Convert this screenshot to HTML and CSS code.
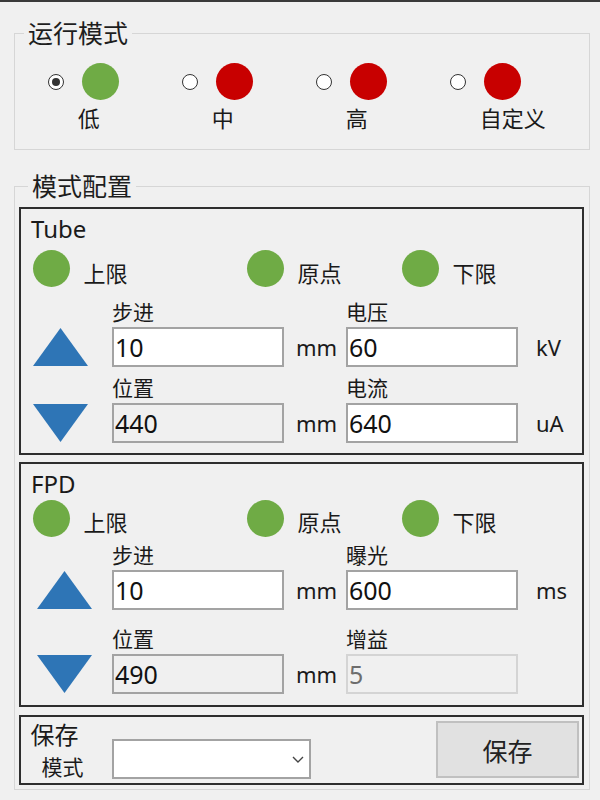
FILE: index.html
```html
<!DOCTYPE html>
<html lang="zh-CN">
<head>
<meta charset="utf-8">
<title>运行模式</title>
<link rel="stylesheet" href="styles.css">
</head>
<body>
<div class="window">
  <fieldset class="group">
    <legend class="group-title">运行模式</legend>
    <div class="modes">
      <div class="opt">
        <span class="radio on"></span>
        <span class="led green"></span>
        <span class="opt-label">低</span>
      </div>
      <div class="opt">
        <span class="radio"></span>
        <span class="led red"></span>
        <span class="opt-label">中</span>
      </div>
      <div class="opt">
        <span class="radio"></span>
        <span class="led red"></span>
        <span class="opt-label">高</span>
      </div>
      <div class="opt">
        <span class="radio"></span>
        <span class="led red"></span>
        <span class="opt-label">自定义</span>
      </div>
    </div>
  </fieldset>

  <fieldset class="group config">
    <legend class="group-title">模式配置</legend>

    <section class="panel tube">
      <div class="panel-title">Tube</div>
      <div class="leds">
        <div class="led-item"><span class="led green"></span><span class="led-text">上限</span></div>
        <div class="led-item"><span class="led green"></span><span class="led-text">原点</span></div>
        <div class="led-item"><span class="led green"></span><span class="led-text">下限</span></div>
      </div>
      <div class="form">
        <span class="lbl lbl-a">步进</span>
        <span class="lbl lbl-b">电压</span>
        <svg class="tri" viewBox="0 0 55 38"><polygon points="27.5,0 55,38 0,38"/></svg>
        <input class="field" value="10">
        <span class="unit">mm</span>
        <input class="field" value="60">
        <span class="unit unit-r">kV</span>
        <span class="lbl lbl-a">位置</span>
        <span class="lbl lbl-b">电流</span>
        <svg class="tri" viewBox="0 0 55 38"><polygon points="0,0 55,0 27.5,38"/></svg>
        <input class="field ro" value="440" readonly>
        <span class="unit">mm</span>
        <input class="field" value="640">
        <span class="unit unit-r">uA</span>
      </div>
    </section>

    <section class="panel fpd">
      <div class="panel-title">FPD</div>
      <div class="leds">
        <div class="led-item"><span class="led green"></span><span class="led-text">上限</span></div>
        <div class="led-item"><span class="led green"></span><span class="led-text">原点</span></div>
        <div class="led-item"><span class="led green"></span><span class="led-text">下限</span></div>
      </div>
      <div class="form">
        <span class="lbl lbl-a">步进</span>
        <span class="lbl lbl-b">曝光</span>
        <svg class="tri" viewBox="0 0 55 38"><polygon points="27.5,0 55,38 0,38"/></svg>
        <input class="field" value="10">
        <span class="unit">mm</span>
        <input class="field" value="600">
        <span class="unit unit-r">ms</span>
        <span class="lbl lbl-a">位置</span>
        <span class="lbl lbl-b">增益</span>
        <svg class="tri" viewBox="0 0 55 38"><polygon points="0,0 55,0 27.5,38"/></svg>
        <input class="field ro" value="490" readonly>
        <span class="unit">mm</span>
        <input class="field off" value="5" disabled>
        <span class="unit unit-r"></span>
      </div>
    </section>

    <section class="panel save">
      <div class="save-labels">
        <span class="save-title">保存</span>
        <span class="save-sub">模式</span>
      </div>
      <div class="combo">
        <svg class="chev" viewBox="0 0 12 7"><polyline points="1,1 6,6 11,1"/></svg>
      </div>
      <button class="btn" type="button">保存</button>
    </section>
  </fieldset>
</div>
</body>
</html>
```

FILE: styles.css
```css
html, body {
  margin: 0;
  padding: 0;
}

body {
  width: 600px;
  height: 800px;
  overflow: hidden;
  background: #f0f0f0;
  color: #1a1a1a;
  font-family: "Noto Sans", "Noto Sans CJK SC", sans-serif;
}

.window {
  border-top: 2px solid #3a3a3a;
  padding: 18px 10px 0 14px;
}

.group {
  margin: 0;
  padding: 0;
  min-width: 0;
  border: 1px solid #d6d6d6;
}

.group-title {
  margin-left: 9px;
  padding: 0 4px;
  font-size: 25px;
  line-height: 26px;
  color: #1e1e1e;
}

/* ---------- run mode ---------- */
.modes {
  display: flex;
  gap: 63.6px;
  padding: 17px 0 19px 33.3px;
}

.opt {
  display: grid;
  grid-template-columns: 16px 37px;
  column-gap: 17.4px;
  row-gap: 6px;
  align-items: center;
}

.radio {
  box-sizing: border-box;
  width: 16px;
  height: 16px;
  border: 1px solid #333;
  border-radius: 50%;
  background: #fff;
  display: flex;
  align-items: center;
  justify-content: center;
}

.radio.on::after {
  content: "";
  width: 8px;
  height: 8px;
  border-radius: 50%;
  background: #333;
}

.led {
  display: block;
  width: 37px;
  height: 37px;
  border-radius: 50%;
}

.led.green {
  background: #6fab45;
}

.led.red {
  background: #c80000;
}

.opt-label {
  grid-column: 2;
  margin-left: -4px;
  font-size: 22px;
  line-height: 24px;
  white-space: nowrap;
}

/* ---------- config ---------- */
.config {
  margin-top: 23px;
  padding: 8px 5px 4px 4px;
  display: flex;
  flex-direction: column;
  gap: 7px;
}

.panel {
  border: 2px solid #2e2e2e;
  padding: 6px 0 10px 0;
}

.panel-title {
  padding-left: 10px;
  font-size: 24px;
  line-height: 28px;
}

.leds {
  display: grid;
  grid-template-columns: 214px 155px 1fr;
  padding-left: 11.5px;
  margin-top: 7px;
}

.fpd .leds {
  margin-top: 1.5px;
}

.led-item {
  display: flex;
  align-items: center;
}

.led-text {
  margin-left: 14px;
  padding-top: 8px;
  font-size: 22px;
  line-height: 24px;
}

.form {
  display: grid;
  grid-template-columns: 79px 172px 62px 172px 1fr;
  grid-template-rows: 27px 40px 36px 40px;
  padding-left: 12px;
  margin-top: 13px;
}

.fpd .form {
  grid-template-rows: 26px 40px 44px 40px;
  margin-top: 7.5px;
}

.fpd {
  margin-top: 0;
  padding-bottom: 11px;
}

.lbl {
  align-self: end;
  margin-bottom: 3px;
  font-size: 21px;
  line-height: 24px;
}

.lbl-a {
  grid-column: 2;
}

.lbl-b {
  grid-column: 4;
}

.tri {
  grid-column: 1;
  width: 55px;
  height: 38px;
  align-self: center;
  fill: #2e75b6;
}

.fpd .tri {
  margin-left: 4px;
}

.field {
  box-sizing: border-box;
  width: 172px;
  height: 40px;
  margin: 0;
  padding: 0 1px;
  border: 2px solid #a3a3a3;
  border-radius: 0;
  background: #fff;
  color: #111;
  font-family: "Noto Sans", "Noto Sans CJK SC", sans-serif;
  font-size: 25px;
  line-height: 36px;
  outline: none;
}

.field.ro {
  background: #f0f0f0;
}

.field.off {
  background: #f0f0f0;
  border-color: #d4d4d4;
  color: #6d6d6d;
}

.unit {
  align-self: center;
  padding-left: 12px;
  font-size: 22px;
  line-height: 24px;
}

.unit-r {
  padding-left: 18px;
}

/* ---------- save ---------- */
.save {
  display: flex;
  align-items: flex-end;
  margin-top: 1px;
  padding: 4px 2px 4px 9.5px;
}

.save-labels {
  flex: 0 0 81.5px;
  align-self: stretch;
  display: flex;
  flex-direction: column;
}

.save-title {
  font-size: 24px;
  line-height: 28px;
}

.save-sub {
  margin-top: 6px;
  margin-left: 11px;
  font-size: 21px;
  line-height: 24px;
}

.combo {
  box-sizing: border-box;
  width: 199px;
  height: 40px;
  border: 2px solid #a3a3a3;
  background: #fff;
  display: flex;
  align-items: center;
  justify-content: flex-end;
  padding-right: 5px;
}

.chev {
  width: 12px;
  height: 7px;
  fill: none;
  stroke: #444;
  stroke-width: 1.4;
}

.btn {
  box-sizing: border-box;
  width: 143px;
  height: 57px;
  margin: 0 1px 1px auto;
  border: 2px solid #c0c0c0;
  border-radius: 0;
  background: #e1e1e1;
  color: #222;
  font-family: "Noto Sans", "Noto Sans CJK SC", sans-serif;
  font-size: 25px;
  padding: 0;
}
```
